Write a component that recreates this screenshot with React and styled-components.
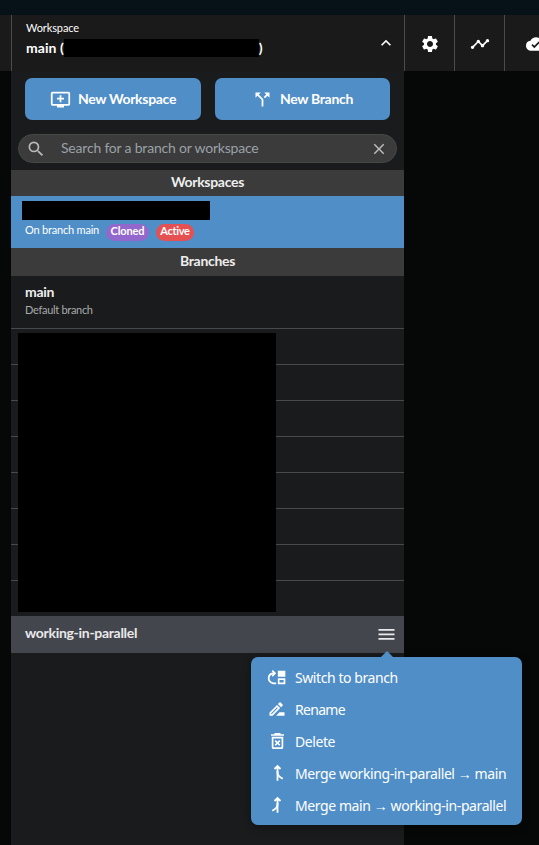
import React from "react";
import styled, { createGlobalStyle } from "styled-components";
import {
  MdAddToQueue, MdCallSplit, MdSearch, MdClose, MdSettings, MdTimeline,
  MdCloudDone, MdKeyboardArrowUp, MdMoveUp, MdOutlineDriveFileRenameOutline,
} from "react-icons/md";

const Global = createGlobalStyle`
  * { box-sizing: border-box; }
  body { margin: 0; background: #060807; overflow: hidden; }
`;

const Page = styled.div`
  width: 539px;
  height: 845px;
  overflow: hidden;
  background: #060807;
  color: #fff;
  font-family: Lato, sans-serif;
`;

const TitleStrip = styled.div`
  height: 15px;
  background: #061118;
`;

const Toolbar = styled.header`
  display: flex;
  height: 56px;
  padding-left: 11px;
  background: #1a1a1a;
`;

const WorkspacePicker = styled.div`
  display: flex;
  align-items: center;
  justify-content: space-between;
  flex: 0 0 393px;
  padding: 0 8px 0 14px;
  border-left: 1px solid #4b4b4b;
`;

const PickerText = styled.div`
  display: flex;
  flex-direction: column;
  height: 56px;
  padding-top: 5px;
`;

const Text = styled.span`
  display: block;
  white-space: nowrap;
  font-size: ${(p) => p.$size || 14}px;
  line-height: ${(p) => p.$line || 18}px;
  font-weight: ${(p) => p.$weight || 700};
  letter-spacing: ${(p) => p.$track ?? -0.3}px;
  color: ${(p) => p.$color || "inherit"};
`;

const PickerValue = styled.div`
  display: flex;
  align-items: center;
  height: 18px;
  margin-top: 3px;
`;

const Redaction = styled.div`
  flex: none;
  width: ${(p) => p.$w}px;
  height: ${(p) => p.$h}px;
  background: #000;
`;

const ToolButton = styled.button`
  display: flex;
  align-items: center;
  justify-content: center;
  flex: 0 0 ${(p) => p.$w || 50}px;
  padding: 1px 0 0;
  border: 0;
  border-left: 1px solid #4b4b4b;
  background: none;
  color: #fff;
`;

const Panel = styled.aside`
  width: 393px;
  height: 774px;
  margin-left: 11px;
  background: #1a1b1d;
`;

const Actions = styled.div`
  display: flex;
  gap: 14px;
  padding: 7px 14px 14px;
`;

const ActionButton = styled.button`
  display: flex;
  align-items: center;
  justify-content: center;
  gap: ${(p) => p.$gap}px;
  width: ${(p) => p.$w}px;
  height: 42px;
  padding: 0;
  border: 0;
  border-radius: 7px;
  background: #508ec8;
  color: #fff;
  font-family: inherit;

  ${Text} {
    padding-bottom: 1px;
  }
`;

const SearchField = styled.div`
  display: flex;
  align-items: center;
  height: 29px;
  margin: 0 7px 7px;
  padding: 0 8px 0 7px;
  border: 1px solid #464846;
  border-radius: 15px;
  background: #3a3b3a;
  color: #b9bab9;
`;

const SearchText = styled.div`
  flex: 1;
  padding: 0 0 2px 15px;
`;

const SectionHeader = styled.div`
  display: flex;
  align-items: center;
  justify-content: center;
  height: ${(p) => p.$h}px;
  padding-bottom: 2px;
  background: #3a3b3a;
  color: #eee;
`;

const ActiveWorkspace = styled.div`
  height: 52px;
  padding: 5px 11px 0;
  background: #508ec8;
`;

const WorkspaceMeta = styled.div`
  display: flex;
  align-items: flex-start;
  padding: 0 0 0 3px;
`;

const BranchNote = styled.div`
  width: 74px;
`;

const Badge = styled.span`
  display: flex;
  justify-content: center;
  width: ${(p) => p.$w}px;
  height: 17px;
  margin: 4px 0 0 7px;
  border-radius: 9px;
  background: ${(p) => p.$bg};
`;

const BranchRow = styled.div`
  height: ${(p) => p.$h || 36}px;
  padding: 7px 14px 0;
  border-bottom: 1px solid #47494a;
`;

const HiddenBranches = styled.div`
  display: grid;
  height: 287px;
`;

const RowStack = styled.div`
  grid-area: 1 / 1;
`;

const HiddenRow = styled.div`
  height: 36px;
  border-bottom: ${(p) => (p.$last ? "0" : "1px solid #47494a")};
`;

const RedactionCover = styled.div`
  grid-area: 1 / 1;
  padding: 4px 7px;
  z-index: 1;
`;

const SelectedBranch = styled.div`
  position: relative;
  display: flex;
  align-items: center;
  justify-content: space-between;
  height: 37px;
  padding: 0 9px 0 14px;
  background: #44464d;
  color: #e9e9eb;
`;

const BranchName = styled.div`
  padding-bottom: 3px;
`;

const Menu = styled.div`
  position: absolute;
  z-index: 2;
  top: 41px;
  left: 240px;
  width: 271px;
  height: 168px;
  padding-top: 4px;
  border-radius: 7px;
  background: #508ec8;
  box-shadow: 0 2px 8px rgba(0, 0, 0, 0.4);
  color: #fff;
  font-family: "Noto Sans", sans-serif;

  ${Text} {
    padding-top: 1px;
  }
`;

const MenuArrow = styled.div`
  position: absolute;
  top: -6px;
  left: 129px;
  border: solid transparent;
  border-width: 0 7px 7px;
  border-bottom-color: #508ec8;
`;

const MenuItem = styled.div`
  display: flex;
  align-items: center;
  height: 32px;
  padding-left: 16px;
`;

const MenuIcon = styled.span`
  display: flex;
  justify-content: center;
  width: 20px;
  margin-right: 8px;
`;

const DeleteIcon = () => (
  <svg width="20" height="20" viewBox="0 0 20 20" fill="none" stroke="currentColor">
    <path d="M4 4h13M7.500 2.900h6" strokeWidth="1.7" />
    <path d="M5.600 6.600h9.800v9.600a1 1 0 0 1-1 1H6.600a1 1 0 0 1-1-1z" strokeWidth="1.7" />
    <path d="M8.200 9.600l4.600 4.600M12.800 9.600l-4.600 4.600" strokeWidth="1.600" />
  </svg>
);

const MergeIcon = ({ flipped }) => (
  <svg width="20" height="20" viewBox="0 0 20 20" fill="none" stroke="currentColor" strokeWidth="1.800">
    <g transform={flipped ? "matrix(-1 0 0 1 21 0)" : undefined}>
      <path d="M10.500 17.800V3.500M7.500 6l3-3 3 3" />
      <path d="M10.500 8v1.500c0 3 2.300 4.800 5.300 6.200" />
    </g>
  </svg>
);

const HamburgerIcon = () => (
  <svg width="17" height="13" viewBox="0 0 17 13" fill="#e9e9eb">
    <path d="M.5 1h16v1.800H.5zM.5 5.500h16v1.800H.5zM.5 10h16v1.800H.5z" />
  </svg>
);

const menuItems = [
  { icon: <MdMoveUp size={21} />, label: "Switch to branch", track: -0.42 },
  { icon: <MdOutlineDriveFileRenameOutline size={20} />, label: "Rename", track: -0.7 },
  { icon: <DeleteIcon />, label: "Delete", track: -0.42 },
  { icon: <MergeIcon />, label: "Merge working-in-parallel → main", track: -0.41 },
  { icon: <MergeIcon flipped />, label: "Merge main → working-in-parallel", track: -0.41 },
];

export default function App() {
  return (
    <Page>
      <Global />
      <TitleStrip />
      <Toolbar>
        <WorkspacePicker>
          <PickerText>
            <Text $size={11} $line={16} $weight={400} $track={-0.1}>Workspace</Text>
            <PickerValue>
              <Text $track={0.05}>main (</Text>
              <Redaction $w={195} $h={18} />
              <Text>)</Text>
            </PickerValue>
          </PickerText>
          <MdKeyboardArrowUp size={20} />
        </WorkspacePicker>
        <ToolButton><MdSettings size={20} /></ToolButton>
        <ToolButton><MdTimeline size={20} /></ToolButton>
        <ToolButton $w={62}><MdCloudDone size={20} /></ToolButton>
      </Toolbar>
      <Panel>
        <Actions>
          <ActionButton $w={176} $gap={7}>
            <MdAddToQueue size={21} />
            <Text>New Workspace</Text>
          </ActionButton>
          <ActionButton $w={175} $gap={7}>
            <MdCallSplit size={21} />
            <Text>New Branch</Text>
          </ActionButton>
        </Actions>
        <SearchField>
          <MdSearch size={20} />
          <SearchText>
            <Text $weight={400} $track={-0.2} $color="#9aa1a8">Search for a branch or workspace</Text>
          </SearchText>
          <MdClose size={18} />
        </SearchField>
        <SectionHeader $h={26}><Text>Workspaces</Text></SectionHeader>
        <ActiveWorkspace>
          <Redaction $w={188} $h={19} />
          <WorkspaceMeta>
            <BranchNote>
              <Text $size={11} $weight={400} $line={20} $track={-0.2}>On branch main</Text>
            </BranchNote>
            <Badge $w={43} $bg="#9368cc"><Text $size={11} $line={13} $track={-0.15}>Cloned</Text></Badge>
            <Badge $w={38} $bg="#e55052"><Text $size={11} $line={13}>Active</Text></Badge>
          </WorkspaceMeta>
        </ActiveWorkspace>
        <SectionHeader $h={28}><Text>Branches</Text></SectionHeader>
        <BranchRow $h={53}>
          <Text $color="#eee">main</Text>
          <Text $size={11} $weight={400} $color="#aaa">Default branch</Text>
        </BranchRow>
        <HiddenBranches>
          <RowStack>
            {[0, 1, 2, 3, 4, 5, 6, 7].map((n) => <HiddenRow key={n} $last={n === 7} />)}
          </RowStack>
          <RedactionCover><Redaction $w={258} $h={279} /></RedactionCover>
        </HiddenBranches>
        <SelectedBranch>
          <BranchName><Text>working-in-parallel</Text></BranchName>
          <HamburgerIcon />
          <Menu>
            <MenuArrow />
            {menuItems.map((item) => (
              <MenuItem key={item.label}>
                <MenuIcon>{item.icon}</MenuIcon>
                <Text $weight={400} $track={item.track}>{item.label}</Text>
              </MenuItem>
            ))}
          </Menu>
        </SelectedBranch>
      </Panel>
    </Page>
  );
}
